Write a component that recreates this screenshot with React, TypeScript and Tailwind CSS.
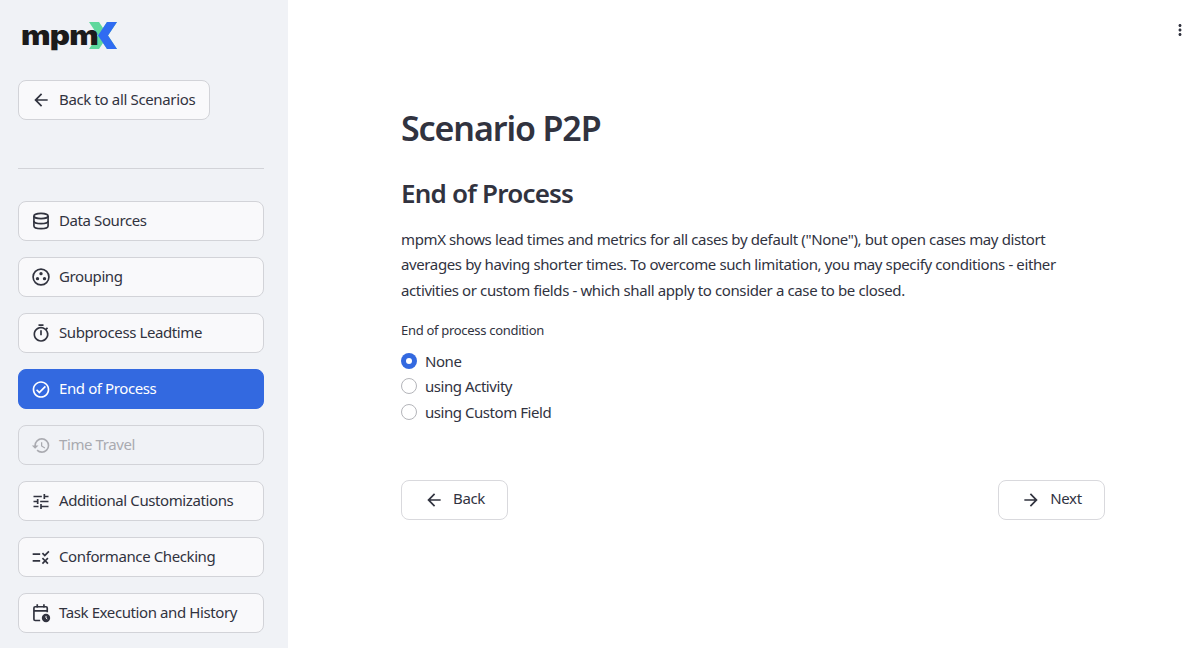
import type { ReactNode } from "react";
import {
  MdArrowBack,
  MdArrowForward,
  MdHistory,
  MdMoreVert,
  MdOutlineCheckCircle,
  MdOutlineTimer,
  MdRule,
  MdTune,
} from "react-icons/md";

const font = "font-['Noto_Sans','Liberation_Sans',sans-serif]";

function DatabaseIcon() {
  return (
    <svg width="20" height="20" viewBox="0 0 24 24" fill="none" stroke="currentColor" strokeWidth="2">
      <ellipse cx="12" cy="6" rx="8.5" ry="3.2" />
      <path d="M3.5 6v12c0 1.8 3.8 3.2 8.5 3.2s8.5-1.4 8.5-3.2V6" />
      <path d="M3.5 12c0 1.8 3.8 3.2 8.5 3.2s8.5-1.4 8.5-3.2" />
    </svg>
  );
}

function GroupingIcon() {
  return (
    <svg width="20" height="20" viewBox="0 0 24 24" fill="currentColor">
      <circle cx="12" cy="12" r="9.500" fill="none" stroke="currentColor" strokeWidth="2" />
      <circle cx="12" cy="8" r="2" />
      <circle cx="7.800" cy="14" r="2" />
      <circle cx="16.200" cy="14" r="2" />
    </svg>
  );
}

function CalendarClockIcon() {
  return (
    <svg width="20" height="20" viewBox="0 0 24 24" fill="none" stroke="currentColor" strokeWidth="2">
      <path d="M11 21H5a1.5 1.5 0 0 1-1.5-1.5V6A1.5 1.5 0 0 1 5 4.500h13A1.500 1.500 0 0 1 19.500 6v5" />
      <path d="M3.500 9.500h16M7.500 1.500v4M15.500 1.500v4" />
      <circle cx="18" cy="18" r="5" fill="currentColor" stroke="none" />
      <path d="M18 15.500V18l1.500 1.200" stroke="#f9f9fb" strokeWidth="1.200" />
    </svg>
  );
}

function NavButton({ icon, label, state }: { icon: ReactNode; label: string; state?: "active" | "disabled" }) {
  let tone = "bg-[#f9f9fb] border-[#d2d3d8] text-[#31333f]";
  if (state === "active") tone = "bg-[#3369e0] border-[#3369e0] text-white";
  if (state === "disabled") tone = "bg-transparent border-[#d2d3d8] text-[#a9aab0]";
  return (
    <div className={`flex h-10 w-[246px] items-center gap-2 rounded-lg border pl-3 text-[15px] tracking-[-0.4px] ${tone}`}>
      <span className="flex w-5 shrink-0 justify-center text-[21px]">{icon}</span>
      <span className="whitespace-nowrap pb-[2px]">{label}</span>
    </div>
  );
}

function Radio({ label, checked }: { label: string; checked?: boolean }) {
  return (
    <div className="flex h-[25.5px] items-center gap-2">
      {checked ? (
        <span className="flex size-4 items-center justify-center rounded-full bg-[#3369e0]">
          <span className="size-1.5 rounded-full bg-white" />
        </span>
      ) : (
        <span className="size-4 rounded-full border border-[#b4b5ba] bg-white" />
      )}
      <span className="text-[15px] tracking-[-0.45px]">{label}</span>
    </div>
  );
}

function OutlineButton({ icon, label }: { icon: ReactNode; label: string }) {
  return (
    <div className="flex h-10 w-[107px] items-center justify-center gap-[9px] rounded-lg border border-[#d9d9dd] bg-white text-[15px] tracking-[-0.35px]">
      <span className="text-[20px]">{icon}</span>
      <span className="pb-[2px]">{label}</span>
    </div>
  );
}

export default function App() {
  return (
    <div className={`flex h-[648px] w-[1200px] overflow-hidden bg-white text-[#31333f] ${font}`}>
      <aside className="flex w-[288px] shrink-0 flex-col bg-[#f0f2f6] pl-[18px]">
        <div className="flex h-[80px] items-start pt-[22px]">
          <span className="ml-[3px] inline-block origin-left scale-x-[1.16] pt-px font-['Inter',sans-serif] text-[27px] font-black leading-[26px] tracking-[-0.6px] text-[#1b1b1b]">
            mpm
          </span>
          <svg className="ml-px" width="28" height="27" viewBox="0 0 28 27">
            <path d="M0 0h10l18 27H18z" fill="#5fd89c" />
            <path d="M18 0h10L10 27H0z" fill="#5fd89c" />
            <path d="M18 0h10L19 13.500 28 27H18l-9-13.500z" fill="#2f6bf2" />
          </svg>
        </div>
        <div className="flex h-10 w-[192px] items-center gap-2 rounded-lg border border-[#d2d3d8] bg-[#f9f9fb] pl-3 text-[15px] tracking-[-0.35px]">
          <span className="flex w-5 justify-center text-[20px]">
            <MdArrowBack />
          </span>
          <span className="whitespace-nowrap pb-[2px]">Back to all Scenarios</span>
        </div>
        <div className="mt-12 h-px w-[246px] bg-[#d2d3d8]" />
        <nav className="mt-8 flex flex-col gap-4">
          <NavButton icon={<DatabaseIcon />} label="Data Sources" />
          <NavButton icon={<GroupingIcon />} label="Grouping" />
          <NavButton icon={<MdOutlineTimer />} label="Subprocess Leadtime" />
          <NavButton icon={<MdOutlineCheckCircle />} label="End of Process" state="active" />
          <NavButton icon={<MdHistory />} label="Time Travel" state="disabled" />
          <NavButton icon={<MdTune />} label="Additional Customizations" />
          <NavButton icon={<MdRule />} label="Conformance Checking" />
          <NavButton icon={<CalendarClockIcon />} label="Task Execution and History" />
        </nav>
      </aside>

      <main className="relative flex-1 pl-[113px] pr-[95px] pt-[104px]">
        <MdMoreVert className="absolute right-[11px] top-[21px] text-[18px]" />
        <h1 className="text-[34px] font-semibold leading-[48px] tracking-[-1.1px]">Scenario P2P</h1>
        <h2 className="mt-[21px] text-[26px] font-semibold leading-[40px] tracking-[-0.8px]">End of Process</h2>
        <p className="mt-[13.7px] w-[690px] text-[15px] leading-[25.5px] tracking-[-0.38px]">
          mpmX shows lead times and metrics for all cases by default ("None"), but open cases may distort averages by
          having shorter times. To overcome such limitation, you may specify conditions - either activities or custom
          fields - which shall apply to consider a case to be closed.
        </p>
        <div className="mt-[17.3px] text-[13px] leading-[20px] tracking-[-0.3px]">End of process condition</div>
        <div className="mt-[7.7px] flex flex-col">
          <Radio label="None" checked />
          <Radio label="using Activity" />
          <Radio label="using Custom Field" />
        </div>
        <div className="mt-[55px] flex justify-between">
          <OutlineButton icon={<MdArrowBack />} label="Back" />
          <OutlineButton icon={<MdArrowForward />} label="Next" />
        </div>
      </main>
    </div>
  );
}
